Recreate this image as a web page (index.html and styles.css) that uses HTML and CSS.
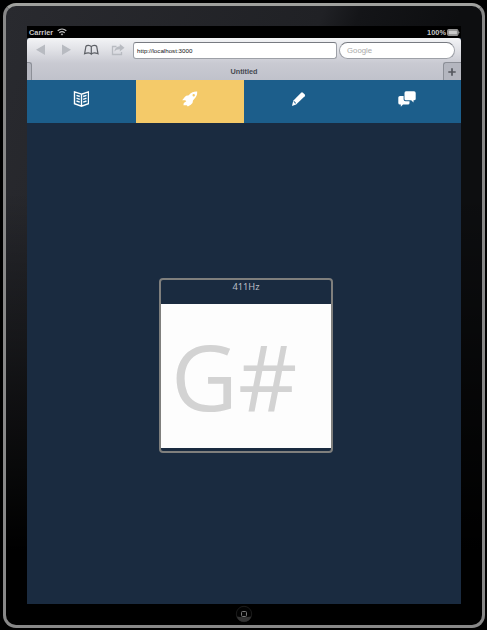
FILE: index.html
```html
<!DOCTYPE html>
<html lang="en">
<head>
<meta charset="utf-8">
<title>Untitled</title>
<link rel="stylesheet" href="styles.css">
</head>
<body>
<div class="device">
  <div class="screen">
    <div class="status">
      <span>Carrier</span>
      <svg class="wifi" width="10" height="8" viewBox="0 0 10 8" fill="none" stroke="#c4c4c4" stroke-width="1.2"><path d="M.7 2.8Q5-.8 9.3 2.8M2.3 4.7Q5 2.4 7.7 4.7"/><path d="M3.7 6 5 7.5 6.3 6Q5 5 3.7 6Z" fill="#c4c4c4" stroke="none"/></svg>
      <span class="percent">100%</span>
      <svg width="13" height="7" viewBox="0 0 13 7"><rect x=".5" y=".5" width="10.5" height="6" rx="1" fill="#777" stroke="#aaa" stroke-width=".8"/><rect x="1.6" y="1.6" width="8.3" height="3.8" fill="#c9c9c9"/><path d="M11.3 2.2q1.2.2 1.2 1.3t-1.2 1.3z" fill="#aaa"/></svg>
    </div>
    <div class="browser">
      <div class="toolbar">
        <svg class="tools" width="106" height="24" viewBox="0 0 106 24">
          <path d="M9 11.700 18 6.500v10.400zM44 11.700 35 6.500v10.400z" fill="#b8bbc1"/>
          <path d="M64.300 8.700Q63.300 7.300 61.400 7.300T58.900 8.400L57.600 15.800Q59.500 14.900 61.300 14.900 63.300 14.900 64.300 16.200 65.300 14.900 67.300 14.900 69.100 14.900 71 15.800L69.700 8.400Q69.100 7.300 67.200 7.300T64.300 8.700ZM64.300 8.700V16" fill="none" stroke="#5d6066" stroke-width="1.200"/>
          <path d="M89.500 8.500H85.500V16.500H94.500V14" fill="none" stroke="#b8bbc1" stroke-width="1.300"/>
          <path d="M92.800 6 97.500 9.800 92.800 13.400V11.300Q89.300 11.200 87.300 13.500 87.900 8.600 92.800 8.200Z" fill="#b8bbc1"/>
        </svg>
        <div class="address">http://localhost:3000</div>
        <div class="search">Google</div>
      </div>
      <div class="tabs">
        <i class="tab-edge"></i>
        <span class="title">Untitled</span>
        <span class="add"><svg width="8" height="8" viewBox="0 0 8 8"><path d="M4 .3V7.700M.3 4H7.700" stroke="#55585f" stroke-width="1.700"/></svg></span>
      </div>
    </div>
    <nav class="nav">
      <a><svg width="16" height="16" viewBox="0 0 16 16" fill="none" stroke="#fff" stroke-width="1.400"><path d="M8.500 3.200 1.500 .9V12.700L8.500 15.200 15.500 12.700V.9ZM8.500 3V15M3.500 4.400 6.800 5.500M3.500 7.200 6.800 8.300M3.500 10 6.800 11.100M13.500 4.400 10.200 5.500M13.500 7.200 10.200 8.300M13.500 10 10.200 11.100"/></svg></a>
      <a class="active"><svg width="16" height="16" viewBox="0 0 16 16" fill="#fff"><path fill-rule="evenodd" d="M15.200.6Q10.400.3 7.200 3.700L6.300 4.600Q4.300 4.300 2.800 6L.2 9.300 3.200 9.200 4.300 10.200 1.800 12 1.400 14.200H4.800L5.800 15.500 8.800 13.800Q11.200 11.800 11 9.400L12 8.300Q15.500 5 15.200.6ZM11.700 3A1.200 1.200 0 1 1 11.700 5.400 1.200 1.200 0 1 1 11.700 3Z"/></svg></a>
      <a><svg width="16" height="16" viewBox="0 0 16 16"><path d="M11.100 1.700Q12 .9 12.900 1.700L14.800 3.600Q15.500 4.400 14.700 5.300L6.100 13.500 2 14.900 3.200 9.800Z" fill="#fff"/><path d="M3.700 10.600 4.900 11 5.300 12.500" fill="none" stroke="#1c5e8b"/></svg></a>
      <a><svg width="18" height="16" viewBox="0 0 18 16" fill="#fff"><path d="M8 .3H16Q17.700.3 17.700 2V8Q17.700 9.300 16 9.300H15.500V11.600L13.200 9.300H8Q6.500 9.300 6.500 8V2Q6.500.3 8 .3Z"/><path d="M5.600 5H2Q.3 5 .3 6.500V12Q.3 13.500 2 13.500H2.800V15.800L5 13.500H10Q11.500 13.500 11.500 12V10.300H7.500Q5.600 10.300 5.600 8.500Z"/></svg></a>
    </nav>
    <main class="stage">
      <section class="card">
        <div class="frequency">411Hz</div>
        <div class="note">G#</div>
      </section>
    </main>
  </div>
  <svg class="home" width="18" height="18" viewBox="0 0 18 18"><circle cx="9" cy="9" r="7.700" fill="#030303" stroke="#222" stroke-width=".8"/><path d="M1.700 11.500Q9 13 16.300 11.500A7.700 7.700 0 0 1 1.700 11.500Z" fill="#333"/><rect x="6.500" y="6.500" width="5" height="5" rx="1" fill="#080808" stroke="#777"/></svg>
</div>
</body>
</html>
```
FILE: styles.css
```css
* { box-sizing: border-box; }

body {
  margin: 0;
  width: 487px;
  height: 630px;
  padding: 3px 2px 2px 3px;
  overflow: hidden;
  background: #000;
  font-family: "Liberation Sans", Arial, sans-serif;
}

.device {
  height: 625px;
  width: 482px;
  border: 3px solid #888;
  border-top-color: #a0a19e;
  border-radius: 13px;
  padding: 20px 20px 0 21px;
  background:
    linear-gradient(to bottom, transparent 30%, #000 88%),
    linear-gradient(110deg, #292a2f 0, #202125 300px, #141518 335px, #0d0e10 430px);
}

.screen {
  width: 434px;
  height: 578px;
  display: flex;
  flex-direction: column;
  background: #1a2b40;
}

.status {
  height: 12px;
  flex: none;
  display: flex;
  align-items: center;
  padding: 0 1px 0 2px;
  background: #000;
  color: #c6c6c6;
  font-size: 7.4px;
  font-weight: bold;
}

.status span:first-child { letter-spacing: 0; }

.wifi { margin-left: 4px; }

.percent {
  margin-left: auto;
  margin-right: 1px;
}

.browser {
  height: 42px;
  flex: none;
  border-radius: 3px 3px 0 0;
  background: linear-gradient(#f3f4f6, #dfe0e5 30%, #c9cad2 60%, #c0c2cb);
}

.toolbar {
  height: 24px;
  display: flex;
  align-items: center;
}

.address,
.search {
  height: 17px;
  border: 1px solid #9da0a7;
  border-top-color: #777a81;
  background: #fff;
  line-height: 15px;
  white-space: nowrap;
}

.address {
  width: 204px;
  border-radius: 3px;
  padding-left: 3px;
  font-size: 6.2px;
  color: #111;
}

.search {
  width: 116px;
  margin-left: 2px;
  border-radius: 9px;
  padding-left: 7px;
  font-size: 7.8px;
  color: #aaa;
}

.tabs {
  height: 18px;
  display: flex;
  justify-content: space-between;
}

.tab-edge {
  width: 5px;
  margin-right: 13px;
  border: solid #8c8f97;
  border-width: 1px 1px 0 0;
  border-radius: 0 3px 0 0;
  background: #b4b6bf;
}

.title {
  line-height: 19px;
  font-size: 7.3px;
  font-weight: bold;
  color: #474a51;
}

.add {
  width: 18px;
  display: flex;
  align-items: center;
  justify-content: center;
  border: solid #8c8f97;
  border-width: 1px 0 0 1px;
  border-radius: 3px 0 0 0;
  background: #b4b6bf;
}

.nav {
  height: 43px;
  flex: none;
  display: grid;
  grid-template-columns: repeat(4, 1fr);
  background: #1c5e8b;
}

.nav a {
  display: flex;
  justify-content: center;
  padding-top: 11px;
}

.nav .active { background: #f4ca69; }

.stage {
  flex: 1;
  padding: 155px 0 0 132px;
}

.card {
  width: 174px;
  height: 175px;
  border: 2px solid #7f7f7d;
  border-radius: 4px;
}

.frequency {
  height: 24px;
  text-align: center;
  font: 9.3px/14px "Noto Sans", sans-serif;
  color: #b9bdc4;
}

.note {
  height: 144px;
  padding-left: 10px;
  background: #fdfdfd;
  color: #d3d3d3;
  font: 92px/144px "Open Sans", sans-serif;
}

.home {
  display: block;
  margin: 1px auto 0 208px;
}
```
